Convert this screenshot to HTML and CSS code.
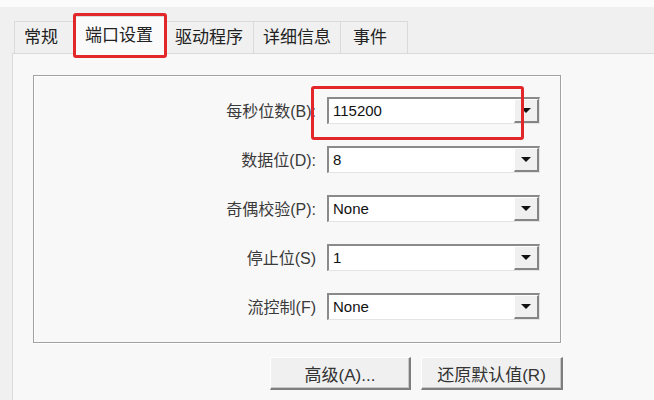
FILE: index.html
```html
<!DOCTYPE html>
<html lang="zh-CN">
<head>
  <meta charset="UTF-8" />
  <title>端口设置</title>
  <link rel="stylesheet" href="styles.css">
</head>
<body>
  <div class="topbar"></div>

  <nav class="tabs">
    <div class="tab tab-general">常规</div>
    <div class="tab tab-port active">端口设置</div>
    <div class="tab tab-driver">驱动程序</div>
    <div class="tab tab-details">详细信息</div>
    <div class="tab tab-events">事件</div>
  </nav>

  <main class="panel">
    <section class="group">
      <div class="row">
        <label class="row-label">每秒位数(B):</label>
        <div class="combo"><span class="combo-value">115200</span><span class="combo-btn"></span></div>
      </div>
      <div class="row">
        <label class="row-label">数据位(D):</label>
        <div class="combo"><span class="combo-value">8</span><span class="combo-btn"></span></div>
      </div>
      <div class="row">
        <label class="row-label">奇偶校验(P):</label>
        <div class="combo"><span class="combo-value">None</span><span class="combo-btn"></span></div>
      </div>
      <div class="row">
        <label class="row-label">停止位(S)</label>
        <div class="combo"><span class="combo-value">1</span><span class="combo-btn"></span></div>
      </div>
      <div class="row">
        <label class="row-label">流控制(F)</label>
        <div class="combo"><span class="combo-value">None</span><span class="combo-btn"></span></div>
      </div>
    </section>

    <div class="actions">
      <button class="btn btn-advanced">高级(A)...</button>
      <button class="btn btn-restore">还原默认值(R)</button>
    </div>
  </main>

  <!-- red annotation boxes -->
  <div class="mark mark-tab"></div>
  <div class="mark mark-combo"></div>
</body>
</html>
```

FILE: styles.css
```css
/* Base */
*, *::before, *::after {
  box-sizing: border-box;
}
body {
  margin: 0;
  width: 654px;
  height: 400px;
  overflow: hidden;
  position: relative;
  background: #f0f0f0;
  color: #333;
  font-family: "Liberation Sans", "Noto Sans CJK SC", sans-serif;
}
.topbar {
  height: 7px;
  background: #fbfbfb;
}

/* Tabs */
.tabs {
  display: flex;
  align-items: flex-end;
  height: 46px;
  padding-left: 14px;
}
.tab {
  height: 32px;
  line-height: 31px;
  font-size: 17px;
  color: #222;
  text-align: center;
  background: #f0f0f0;
  border: 1px solid #dadada;
  border-bottom: none;
  margin-right: -1px;
}
.tab-general { width: 60px; padding-right: 6px; }
.tab-port { width: 92px; }
.tab-driver { width: 90px; }
.tab-details { width: 88px; }
.tab-events { width: 68px; padding-right: 8px; }
.tab.active {
  height: 38px;
  line-height: 38px;
  margin-bottom: -1px;
  background: #fafafa;
  position: relative;
  z-index: 1;
}

/* Panel */
.panel {
  margin-left: 12px;
  width: 660px;
  height: 360px;
  background: #f8f8f8;
  border: 1px solid #dadada;
  padding: 21px 0 0 20px;
}
.group {
  width: 528px;
  height: 268px;
  border: 1px solid #a2a2a2;
  box-shadow: inset 1px 1px 0 #fff, 1px 1px 0 #fff;
  padding-top: 21px;
  display: flex;
  flex-direction: column;
  gap: 23px;
}
.row {
  display: flex;
  align-items: center;
  height: 26px;
}
.row-label {
  width: 293px;
  padding-right: 11px;
  text-align: right;
  font-size: 16px;
  color: #3a3a3a;
}

/* Combo box */
.combo {
  display: flex;
  width: 213px;
  height: 27px;
  background: #fff;
  border-top: 2px solid #8a8a8a;
  border-left: 2px solid #8a8a8a;
  border-right: 1px solid #e4e4e4;
  border-bottom: 1px solid #e4e4e4;
}
.combo-value {
  flex: 1;
  padding-left: 4px;
  font-size: 15px;
  line-height: 24px;
  color: #111;
}
.combo-btn {
  width: 25px;
  background: #f0f0f0;
  border-top: 1px solid #fff;
  border-left: 1px solid #fff;
  border-right: 2px solid #858585;
  border-bottom: 2px solid #858585;
  display: flex;
  align-items: center;
  justify-content: center;
}
.combo-btn::after {
  content: "";
  border-left: 5px solid transparent;
  border-right: 5px solid transparent;
  border-top: 5px solid #111;
}

/* Buttons */
.actions {
  display: flex;
  gap: 10px;
  margin: 14px 0 0 237px;
}
.btn {
  height: 33px;
  font-family: "Liberation Sans", "Noto Sans CJK SC", sans-serif;
  font-size: 17px;
  color: #333;
  background: #f0f0f0;
  border-top: 1px solid #fff;
  border-left: 1px solid #fff;
  border-right: 2px solid #7e7e7e;
  border-bottom: 2px solid #7e7e7e;
  box-shadow: inset -1px -1px 0 #c8c8c8;
  padding: 0;
}
.btn-advanced { width: 141px; }
.btn-restore { width: 142px; }

/* Red annotation boxes */
.mark {
  position: absolute;
  border: 3px solid #e2262a;
  border-radius: 3px;
  z-index: 5;
}
.mark-tab {
  left: 73px;
  top: 13px;
  width: 94px;
  height: 45px;
}
.mark-combo {
  left: 311px;
  top: 86px;
  width: 213px;
  height: 54px;
}
```
